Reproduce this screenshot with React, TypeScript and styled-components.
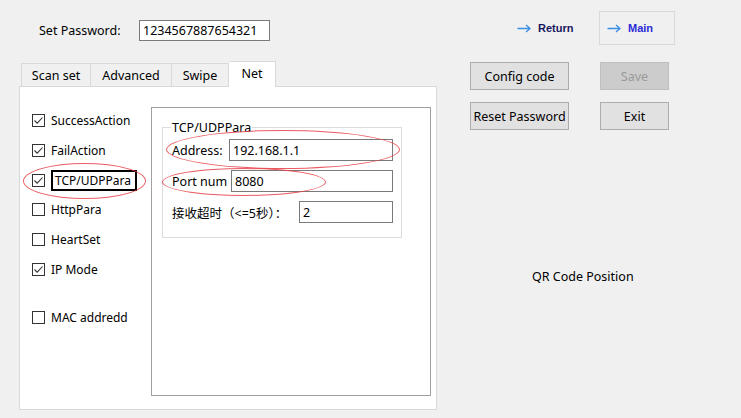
import React from 'react';
import styled, { createGlobalStyle } from 'styled-components';

// Global

const GlobalStyle = createGlobalStyle`
    html, body {
        margin: 0;
        padding: 0;
        background: #f0f0f0;
    }
    body {
        font-family: "Noto Sans", "Noto Sans CJK SC", sans-serif;
        font-size: 12.5px;
        color: #000;
    }
`

// Styles

const Window = styled.div`
    display: flex;
    width: 741px;
    height: 418px;
    background: #f0f0f0;
    overflow: hidden;
`
const LeftColumn = styled.div`
    display: flex;
    flex-direction: column;
    margin-left: 19px;
    width: 418px;
`
const PasswordRow = styled.div`
    display: flex;
    align-items: center;
    height: 21px;
    margin: 20px 0 0 20px;
`
const PasswordLabel = styled.span`
    width: 100px;
`
const TextBox = styled.input<{ $width: number; $height?: number }>`
    box-sizing: border-box;
    width: ${p => p.$width}px;
    height: ${p => p.$height ?? 22}px;
    margin: 0;
    padding: 0 0 0 3px;
    border: 1px solid #7a7a7a;
    background: #fff;
    font: inherit;
    color: #000;
    outline: none;
`
const TabStrip = styled.div`
    display: flex;
    align-items: flex-end;
    height: 25px;
    margin-top: 20px;
    padding-left: 2px;
    position: relative;
    z-index: 1;
`
const Tab = styled.div<{ $width: number; $active?: boolean }>`
    box-sizing: border-box;
    width: ${p => p.$width}px;
    height: ${p => (p.$active ? 26 : 23)}px;
    margin-bottom: ${p => (p.$active ? -1 : 0)}px;
    padding-bottom: ${p => (p.$active ? 3 : 0)}px;
    display: flex;
    align-items: center;
    justify-content: center;
    background: ${p => (p.$active ? '#fff' : '#f0f0f0')};
    border: 1px solid #d9d9d9;
    border-bottom: none;
    & + & {
        border-left: none;
    }
`
const TabPage = styled.div`
    box-sizing: border-box;
    display: flex;
    align-items: flex-start;
    height: 324px;
    padding: 19px 0 0 12px;
    background: #fff;
    border: 1px solid #d9d9d9;
`
const CheckList = styled.div`
    display: flex;
    flex-direction: column;
    width: 119px;
    font-size: 12px;
`
const CheckRow = styled.div<{ $gapBefore?: number }>`
    position: relative;
    display: flex;
    align-items: center;
    gap: 6px;
    height: 29.7px;
    margin-top: ${p => p.$gapBefore ?? 0}px;
    white-space: nowrap;
`
const Box = styled.span`
    box-sizing: border-box;
    display: flex;
    align-items: center;
    justify-content: center;
    width: 13px;
    height: 13px;
    border: 1px solid #333;
    background: #fff;
    flex-shrink: 0;
`
const FocusLabel = styled.span`
    box-sizing: border-box;
    display: flex;
    align-items: center;
    height: 21px;
    padding: 0 4px 0 2px;
    border: 2px solid #000;
`
const Frame = styled.div`
    box-sizing: border-box;
    width: 280px;
    height: 289px;
    margin-top: 1px;
    padding: 0 10px;
    border: 1px solid #a0a0a0;
`
const GroupBox = styled.fieldset`
    box-sizing: border-box;
    width: 240px;
    min-width: 0;
    margin: 12px 0 0;
    padding: 4px 8px 14px 9px;
    border: 1px solid #dcdcdc;
`
const GroupTitle = styled.legend`
    margin-left: -1px;
    padding: 0 1px;
    line-height: 15px;
`
const FormRow = styled.div`
    position: relative;
    display: flex;
    align-items: center;
    justify-content: space-between;
    height: 22px;
    & + & {
        margin-top: 9px;
    }
`
const Ellipse = styled.span<{ $left: number; $top: number; $w: number; $h: number }>`
    position: absolute;
    left: ${p => p.$left}px;
    top: ${p => p.$top}px;
    width: ${p => p.$w}px;
    height: ${p => p.$h}px;
    box-sizing: border-box;
    border: 1px solid rgba(232, 64, 70, 0.85);
    border-radius: 50%;
    pointer-events: none;
`
const RightColumn = styled.div`
    display: flex;
    flex-direction: column;
    margin-left: 33px;
`
const NavRow = styled.div`
    display: flex;
    align-items: center;
    height: 34px;
    margin-top: 11px;
`
const NavLink = styled.div<{ $boxed?: boolean; $color: string }>`
    box-sizing: border-box;
    display: flex;
    align-items: center;
    gap: 7px;
    height: 34px;
    font-family: "Liberation Sans", sans-serif;
    font-weight: bold;
    font-size: 11px;
    color: ${p => p.$color};
    ${p => p.$boxed
        ? 'width: 76px; padding-left: 7px; border: 1px solid #d9d9d9;'
        : 'width: 82px; margin-left: 47px;'}
`
const ButtonGrid = styled.div`
    display: grid;
    grid-template-columns: 99px 69px;
    grid-auto-rows: 28px;
    column-gap: 31px;
    row-gap: 12px;
    margin-top: 17px;
`
const Button = styled.button`
    box-sizing: border-box;
    margin: 0;
    padding: 0;
    border: 1px solid #adadad;
    background: #e1e1e1;
    font: inherit;
    color: #000;
    white-space: nowrap;
    &:disabled {
        border-color: #bfbfbf;
        background: #cccccc;
        color: #9a9a9a;
    }
`
const QrLabel = styled.span`
    margin: 139px 0 0 62px;
    line-height: 15px;
`

// Assets

const CheckMark = () => (
    <svg width="11" height="11" viewBox="0 0 11 11">
        <path d="M1.5 5.5 L4.2 8.2 L9.5 2.5" fill="none" stroke="#333" strokeWidth="1.1" />
    </svg>
)

const Arrow = () => (
    <svg width="14" height="9" viewBox="0 0 14 9">
        <path d="M0.5 4.5 H13 M9 1 L13 4.5 L9 8" fill="none" stroke="#3a8ee6" strokeWidth="1.3" />
    </svg>
)

const options = [
    { label: 'SuccessAction', checked: true },
    { label: 'FailAction', checked: true },
    { label: 'TCP/UDPPara', checked: true, focused: true },
    { label: 'HttpPara', checked: false },
    { label: 'HeartSet', checked: false },
    { label: 'IP Mode', checked: true },
    { label: 'MAC addredd', checked: false, gapBefore: 19 },
]

const tabs = [
    { label: 'Scan set', width: 70 },
    { label: 'Advanced', width: 81 },
    { label: 'Swipe', width: 57 },
    { label: 'Net', width: 47, active: true },
]

const App = () => {
    return (
        <Window>
            <GlobalStyle />
            <LeftColumn>
                <PasswordRow>
                    <PasswordLabel>Set Password:</PasswordLabel>
                    <TextBox $width={131} $height={21} defaultValue="1234567887654321" readOnly />
                </PasswordRow>

                <TabStrip>
                    {tabs.map(t => (
                        <Tab key={t.label} $width={t.width} $active={t.active}>{t.label}</Tab>
                    ))}
                </TabStrip>

                <TabPage>
                    <CheckList>
                        {options.map(o => (
                            <CheckRow key={o.label} $gapBefore={o.gapBefore}>
                                <Box>{o.checked && <CheckMark />}</Box>
                                {o.focused ? <FocusLabel>{o.label}</FocusLabel> : <span>{o.label}</span>}
                                {o.focused && <Ellipse $left={-9} $top={-2} $w={123} $h={36} />}
                            </CheckRow>
                        ))}
                    </CheckList>

                    <Frame>
                        <GroupBox>
                            <GroupTitle>TCP/UDPPara</GroupTitle>
                            <FormRow>
                                <span>Address:</span>
                                <TextBox $width={164} defaultValue="192.168.1.1" readOnly />
                                <Ellipse $left={-6} $top={-9} $w={234} $h={39} />
                            </FormRow>
                            <FormRow>
                                <span>Port num</span>
                                <TextBox $width={162} defaultValue="8080" readOnly />
                                <Ellipse $left={-10} $top={-2} $w={164} $h={28} />
                            </FormRow>
                            <FormRow>
                                <span>接收超时（&lt;=5秒）：</span>
                                <TextBox $width={94} defaultValue="2" readOnly />
                            </FormRow>
                        </GroupBox>
                    </Frame>
                </TabPage>
            </LeftColumn>

            <RightColumn>
                <NavRow>
                    <NavLink $color="#17175e"><Arrow />Return</NavLink>
                    <NavLink $boxed $color="#2b2bd8"><Arrow />Main</NavLink>
                </NavRow>

                <ButtonGrid>
                    <Button>Config code</Button>
                    <Button disabled>Save</Button>
                    <Button>Reset Password</Button>
                    <Button>Exit</Button>
                </ButtonGrid>

                <QrLabel>QR Code Position</QrLabel>
            </RightColumn>
        </Window>
    );
};

export default App;
